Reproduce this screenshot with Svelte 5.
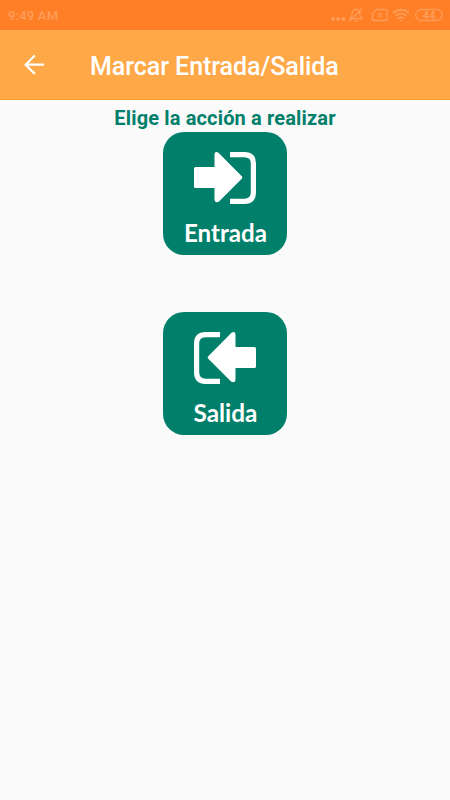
<script>
  // Pantalla para marcar la entrada o la salida
  const acciones = [
    { id: 'entrada', texto: 'Entrada', ancho: 83 },
    { id: 'salida', texto: 'Salida', ancho: 64 }
  ]

  export let onVolver = () => {}
  export let onMarcar = (id) => {}
</script>

<div class="pantalla">
  <div class="status">
    <span class="hora">9:49 AM</span>
    <svg class="status-icons" width="114" height="16" viewBox="0 0 114 16" fill="none" stroke="currentColor" stroke-width="1.3">
      <g fill="currentColor" stroke="none">
        <circle cx="3" cy="12" r="1.9" />
        <circle cx="8.200" cy="12" r="1.9" />
        <circle cx="13.400" cy="12" r="1.9" />
      </g>
      <path d="M20 11.700h12l-2-2.700V6.500a4 4 0 0 0-8 0V9zM24.500 13.900h3M32 1.700 19.500 14.200" />
      <path d="M46.500 2.500H56q1 0 1 1v9q0 1-1 1H43.500q-1 0-1-1v-6zM48 6l4 4M52 6l-4 4" />
      <g stroke-width="1.7">
        <path d="M63 6q8-6.500 16 0M65.500 8.800q5.500-4.200 11 0M68 11.500q3-2.200 6 0" />
        <path d="M70 13.300h2l-1 1z" fill="currentColor" stroke-width="1" />
      </g>
      <rect x="85.700" y="2.500" width="26.600" height="11" rx="5.500" />
      <text class="bateria" x="99" y="12" text-anchor="middle">44</text>
    </svg>
  </div>

  <header class="barra">
    <button class="volver" aria-label="Volver" on:click={onVolver}>
      <svg width="22" height="22" viewBox="0 0 22 22" fill="none" stroke="currentColor" stroke-width="2.200">
        <path d="M21 10.700H3M11.800 1.500 2.600 10.700l9.200 9.200" />
      </svg>
    </button>
    <h1>Marcar Entrada/Salida</h1>
  </header>

  <main>
    <h2>Elige la acción a realizar</h2>
    <div class="acciones">
      {#each acciones as accion}
        <button class="accion" aria-label={accion.texto} on:click={() => onMarcar(accion.id)}>
          <svg width="124" height="123" viewBox="0 0 124 123">
            <g transform={accion.id === 'salida' ? 'translate(124 0) scale(-1 1)' : null}>
              <path fill="#fff" d="M32.500 35H51.500V23q0-4.500 4-2.300L79 44.500q.7 1 0 2L56 69.500q-4.500 2-4.500-2V56h-19q-1.500 0-1.500-1.500v-18q0-1.500 1.500-1.500z" />
              <path fill="none" stroke="#fff" stroke-width="5.200" d="M67 22.700h14.400q9 0 9 9v28.600q0 9-9 9H67" />
            </g>
            <text class="texto" x={62.500 - accion.ancho / 2} y="109.500" textLength={accion.ancho} lengthAdjust="spacingAndGlyphs">{accion.texto}</text>
          </svg>
        </button>
      {/each}
    </div>
  </main>
</div>

<style>
  :global(body) { margin: 0; background: #fafafa; }
  .pantalla { height: 800px; display: flex; flex-direction: column; background: #fafafa; font-family: Roboto, sans-serif; overflow: hidden; }
  .status { box-sizing: border-box; height: 30px; padding: 0 6px 0 8px; display: flex; align-items: center; justify-content: space-between; background: #ff7f27; color: #ff9d58; }
  .hora { font-size: 13px; font-weight: 500; line-height: 30px; letter-spacing: 0.2px; padding-top: 1px; }
  .bateria { font-size: 11px; font-weight: 700; fill: currentColor; stroke: none; }
  .barra { box-sizing: border-box; height: 70px; padding-left: 23px; display: flex; align-items: center; background: #ffa848; border-bottom: 1px solid #ff9f27; color: #fff; }
  .volver { width: 22px; height: 22px; margin-right: 45px; padding: 0; border: none; background: none; color: #fff; cursor: pointer; }
  .volver svg { display: block; }
  h1 { margin: 4px 0 0; font-size: 25px; font-weight: 500; line-height: 30px; letter-spacing: -0.06px; white-space: nowrap; }
  main { display: flex; flex-direction: column; align-items: center; padding-top: 5px; }
  h2 { margin: 0 0 1px; font-size: 20px; font-weight: 700; line-height: 26px; letter-spacing: 0.15px; color: #00806b; white-space: nowrap; }
  .acciones { display: flex; flex-direction: column; gap: 57px; }
  .accion { width: 124px; height: 123px; padding: 0; border: none; border-radius: 21px; background: #00806b; cursor: pointer; }
  .accion svg { display: block; }
  .texto { font-family: Lato, sans-serif; font-size: 24px; font-weight: 700; fill: #fff; }
</style>
